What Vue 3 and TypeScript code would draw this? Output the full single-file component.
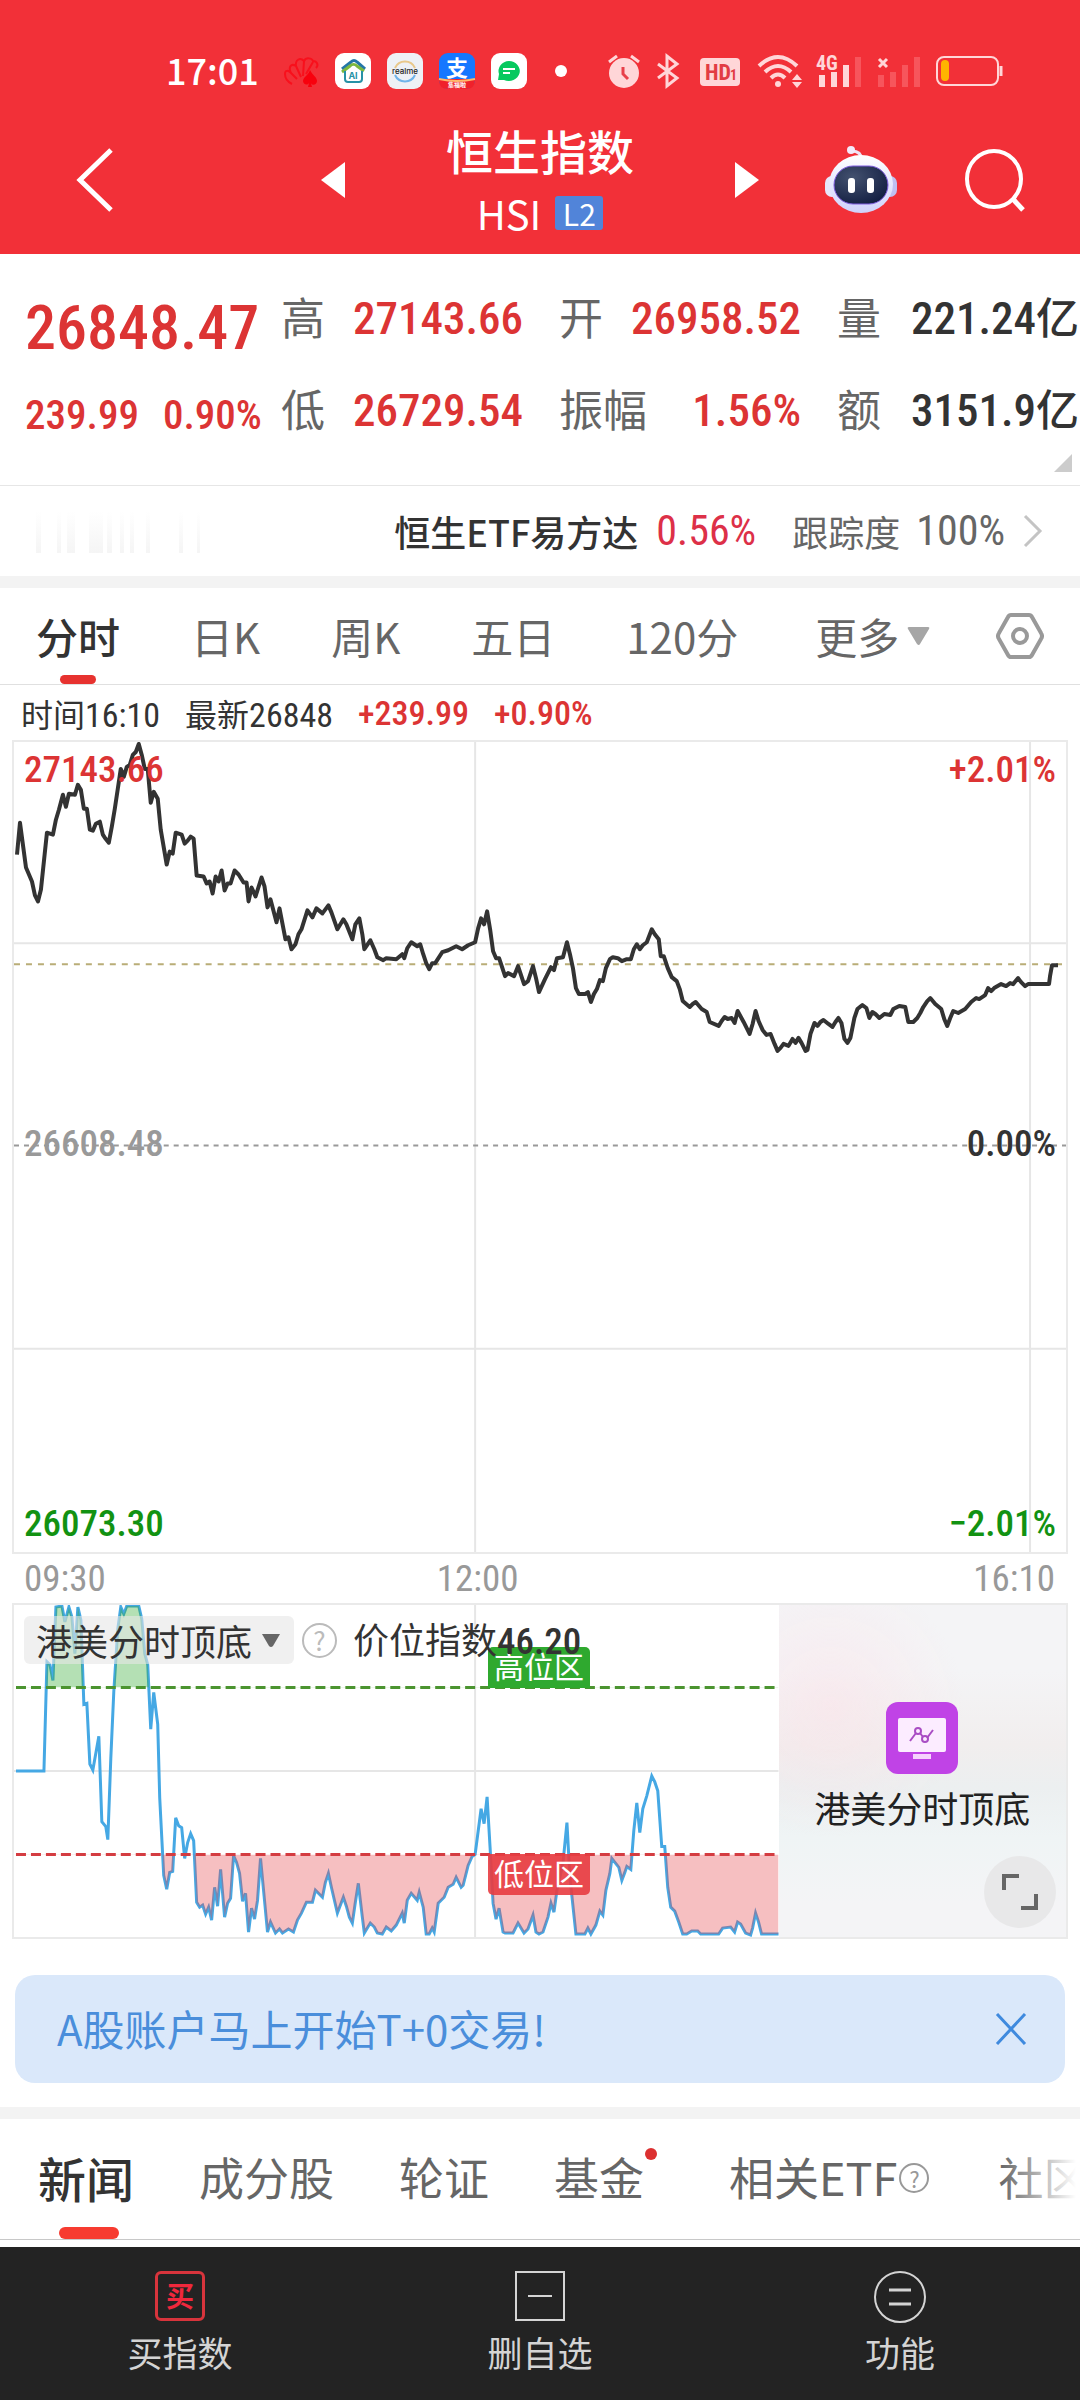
<script setup lang="ts">
import { ref } from 'vue'

interface Quote { label: string; value: string; unit?: string; up: boolean }
interface Section { name: string; dot?: boolean; help?: boolean }

const quotes: Quote[] = [
  { label: '高', value: '27143.66', up: true },
  { label: '开', value: '26958.52', up: true },
  { label: '量', value: '221.24', unit: '亿', up: false },
  { label: '低', value: '26729.54', up: true },
  { label: '振幅', value: '1.56%', up: true },
  { label: '额', value: '3151.9', unit: '亿', up: false }
]

const periods: string[] = ['分时', '日K', '周K', '五日', '120分']
const period = ref<string>('分时')

const sections: Section[] = [
  { name: '新闻' },
  { name: '成分股' },
  { name: '轮证' },
  { name: '基金', dot: true },
  { name: '相关ETF', help: true },
  { name: '社区' }
]
const section = ref<string>('新闻')
const bannerOpen = ref<boolean>(true)

// Intraday price, in chart units (1054 x 813)
const price =
  '3,113 6,81 12,126 18,140 21,154 24,160 27,148 33,91 39,93 42,78 45,68 49,53 52,65 55,52 61,53 64,43 67,48 70,67 73,67 76,88 79,89 82,82 86,80 89,93 91,96 95,101 98,85 101,67 104,47 107,27 110,35 113,25 116,23 119,13 122,10 125,2 128,13 131,27 134,27 137,61 140,50 144,57 147,88 153,123 156,110 159,112 162,91 168,93 171,102 174,99 177,95 180,97 183,134 190,135 193,142 196,140 199,152 202,135 205,140 208,129 211,149 214,142 217,142 221,129 225,133 230,141 233,141 235,160 238,146 242,155 248,136 251,145 254,166 257,158 263,181 266,167 272,198 275,196 278,208 282,203 285,193 288,188 294,169 299,176 303,167 309,172 315,164 318,171 324,188 330,178 333,183 339,198 342,183 346,177 349,193 351,208 357,199 361,208 364,216 370,219 373,217 383,218 389,213 391,217 394,207 398,201 404,205 407,203 410,213 413,222 416,228 419,222 422,222 429,211 435,209 443,205 449,208 455,204 462,201 465,187 468,177 471,183 474,170 477,188 480,210 483,217 486,217 492,235 495,232 501,235 505,225 511,243 515,240 520,225 523,237 526,251 532,238 538,226 541,229 544,217 550,216 554,201 557,213 560,227 563,247 566,253 572,253 575,251 578,261 581,253 584,248 587,239 590,240 593,227 597,218 600,216 605,217 609,220 614,218 618,218 621,208 624,203 627,208 630,204 634,201 639,188 642,193 646,198 648,215 651,215 655,227 659,236 664,240 667,248 670,260 677,266 680,263 683,261 689,268 694,271 697,281 706,285 709,280 712,276 715,278 719,277 722,282 725,270 731,281 737,293 740,283 743,270 746,280 750,289 754,294 758,293 762,303 765,310 768,307 771,303 776,305 780,298 783,302 786,297 789,302 793,310 795,309 798,293 802,282 805,285 808,281 811,279 816,283 820,286 823,281 826,277 829,282 832,298 835,302 838,297 842,277 845,268 850,264 854,267 857,277 860,271 863,273 867,277 872,273 878,274 881,268 887,265 893,266 896,281 901,281 905,277 908,272 911,266 915,260 918,257 923,263 929,268 932,278 935,285 938,277 941,270 946,272 953,268 959,261 964,257 967,258 973,254 976,247 979,250 982,247 989,243 994,245 998,242 1001,243 1006,237 1009,241 1013,245 1016,243 1037,243 1038,235 1040,224 1046,224'

// Position index, in chart units (766 x 334)
const position =
  '2,167 30,167 33,57 36,60 39,76 42,2 48,1 51,17 55,2 58,12 61,49 64,2 67,15 70,100 73,99 76,160 79,166 85,132 88,218 92,223 94,236 97,154 100,87 104,24 107,2 110,9 113,1 125,1 128,14 131,49 134,60 137,125 140,88 144,120 146,194 150,272 153,286 156,269 159,268 162,214 165,222 168,224 171,255 174,239 177,230 180,237 183,299 186,304 189,302 192,311 195,304 198,317 201,284 204,303 207,266 211,314 214,300 217,295 220,252 223,259 226,270 229,298 232,290 235,329 238,305 241,316 244,297 247,255 254,329 257,319 262,330 266,326 269,330 275,326 280,329 284,317 288,310 293,299 299,299 302,287 309,294 312,279 315,270 318,284 324,310 330,294 333,303 336,314 339,320 342,299 345,280 349,314 351,330 357,320 361,324 364,330 369,331 373,324 378,328 383,322 389,310 391,320 394,297 398,290 404,297 406,289 410,304 413,331 416,331 419,325 421,329 425,300 431,294 435,284 440,281 443,274 448,284 450,282 455,262 459,253 462,251 468,205 471,220 474,193 477,244 480,300 483,316 486,305 490,329 492,330 500,330 505,320 511,330 515,326 520,312 523,329 526,331 530,329 535,314 538,300 541,309 544,287 550,260 554,219 557,274 563,331 572,331 575,325 578,331 583,322 587,308 590,312 593,287 597,270 599,255 606,264 609,277 612,269 614,263 618,266 621,227 624,199 627,229 630,205 634,192 639,172 642,178 645,187 649,243 652,243 655,284 658,304 662,308 666,319 670,331 674,331 679,328 685,328 688,331 706,331 710,325 718,324 722,329 725,319 728,321 733,330 738,332 740,325 743,310 746,319 749,331 766,331'

const highArea = `2,83 ${position} 766,83`
const lowArea = `2,251 ${position} 766,251`
</script>

<template>
  <div class="app">
    <header class="top">
      <div class="status">
        <span class="clock">17:01</span>
        <div class="notices">
          <svg width="36" height="36" viewBox="0 0 36 36" aria-hidden="true">
            <path d="M9 31C5 29 2 25 2 21c0-4 3-4 6-1-3-6 0-10 5-7-1-6 4-9 8-5 2-4 8-3 9 0 4 0 6 4 3 7M8 20l6 6M13 13l5 11M21 8l-1 15M30 9l-7 12" fill="none" stroke="#f8101c" stroke-width="2" />
            <path d="M27 17c3 6 7 7 7 11 0 4-5 5-6 2l1 4h-4l1-4c-2 3-6 1-6-2 0-4 5-5 7-11z" fill="#f8000d" />
          </svg>
          <svg width="36" height="36" viewBox="0 0 36 36" aria-hidden="true">
            <rect width="36" height="36" rx="9" fill="#fff" />
            <path d="M7 16l9-7c2-2 4-2 6 0l8 7" fill="none" stroke="#2476a8" stroke-width="3" />
            <path d="M7 19l8-6c2-2 5-2 7 0l7 5" fill="none" stroke="#7cb83f" stroke-width="3" />
            <path d="M10 18v8q0 3 3 3h11q3 0 3-3v-8" fill="none" stroke="#2792a6" stroke-width="2" />
            <text x="18" y="26" text-anchor="middle" font-family="Inter" font-size="9" font-weight="700" fill="#2792a6">AI</text>
          </svg>
          <svg width="36" height="36" viewBox="0 0 36 36" aria-hidden="true">
            <rect width="36" height="36" rx="9" fill="#eef1f6" />
            <path d="M8 15a11 11 0 0 1 20 0" fill="none" stroke="#e9c88a" stroke-width="2" />
            <path d="M8 22a11 11 0 0 0 20 0" fill="none" stroke="#6fb4ea" stroke-width="2" />
            <text x="18" y="21" text-anchor="middle" font-family="Inter" font-size="8" font-weight="500" fill="#222">realme</text>
          </svg>
          <svg width="36" height="36" viewBox="0 0 36 36" aria-hidden="true">
            <rect width="36" height="36" rx="9" fill="#1677ff" />
            <path d="M0 26h36v1q0 9-9 9H9q-9 0-9-9z" fill="#f0212b" />
            <path d="M0 26q18 4 36 0" fill="none" stroke="#ffb86b" stroke-width="2" />
            <text x="18" y="23" text-anchor="middle" font-family="Noto Sans CJK SC" font-size="22" font-weight="700" fill="#fff">支</text>
            <text x="18" y="34" text-anchor="middle" font-family="Noto Sans CJK SC" font-size="6" font-weight="700" fill="#fff">集福啦</text>
          </svg>
          <svg width="36" height="36" viewBox="0 0 36 36" aria-hidden="true">
            <rect width="36" height="36" rx="9" fill="#fff" />
            <path d="M18 8a11 10 0 1 1-5 19H7l1-6A11 10 0 0 1 18 8z" fill="#07c95f" />
            <path d="M12 16h12M12 20h7" stroke="#fff" stroke-width="2" />
          </svg>
        </div>
        <span class="more-dot"></span>
        <div class="signals">
          <svg width="32" height="36" viewBox="0 0 32 36" aria-hidden="true">
            <circle cx="16" cy="20" r="15" fill="#ffd6d8" />
            <path d="M1 9l8-6M31 9l-8-6" stroke="#ffd6d8" stroke-width="3" />
            <path d="M15 14v7l5 5" fill="none" stroke="#e8404a" stroke-width="3" />
          </svg>
          <svg width="28" height="36" viewBox="0 0 28 36" aria-hidden="true">
            <path d="M4 11l19 14-10 8V3l10 8L4 25" fill="none" stroke="#ffd6d8" stroke-width="3" />
          </svg>
          <svg width="46" height="36" viewBox="0 0 46 36" aria-hidden="true">
            <rect x="4" y="5" width="40" height="28" rx="4" fill="#ffd6d8" />
            <text x="9" y="27" font-family="Roboto Condensed" font-size="22" font-weight="700" fill="#e23b44">HD</text>
            <text x="34" y="27" font-family="Roboto Condensed" font-size="14" font-weight="700" fill="#e23b44">1</text>
          </svg>
          <svg width="46" height="36" viewBox="0 0 46 36" aria-hidden="true">
            <path d="M3 13q19-18 38 0M9 19q13-12 26 0M15 25q7-7 14 0" fill="none" stroke="#ffd6d8" stroke-width="4" />
            <circle cx="22" cy="31" r="3" fill="#ffd6d8" />
            <path d="M36 27l5-6 5 6zM36 29l5 6 5-6z" fill="#ffd6d8" />
          </svg>
          <svg width="48" height="36" viewBox="0 0 48 36" aria-hidden="true">
            <path d="M3 22h6v12H3zM15 19h6v15h-6zM27 12h6v22h-6z" fill="#ffd6d8" />
            <path d="M39 4h6v30h-6z" fill="#f7555c" />
            <text x="0" y="17" font-family="Roboto Condensed" font-size="20" font-weight="700" fill="#ffd6d8">4G</text>
          </svg>
          <svg width="44" height="36" viewBox="0 0 44 36" aria-hidden="true">
            <path d="M0 22h6v12H0zM12 19h6v15h-6zM24 12h6v22h-6zM36 4h6v30h-6z" fill="#f7555c" />
            <path d="M1 6l8 8M9 6l-8 8" stroke="#ffd6d8" stroke-width="3" />
          </svg>
          <svg width="68" height="36" viewBox="0 0 68 36" aria-hidden="true">
            <rect x="1" y="4" width="61" height="28" rx="7" fill="none" stroke="#ffd6d8" stroke-width="2" />
            <rect x="5" y="7" width="8" height="21" rx="4" fill="#ffb400" />
            <path d="M65 13v10" stroke="#ffd6d8" stroke-width="3" />
          </svg>
        </div>
      </div>

      <nav class="title-bar">
        <button class="back" aria-label="返回">
          <svg width="40" height="68" viewBox="0 0 40 68"><path d="M36 4L5 34l31 30" fill="none" stroke="#fff" stroke-width="5" /></svg>
        </button>
        <div class="title-group">
          <button aria-label="上一个"><svg width="24" height="36" viewBox="0 0 24 36"><path d="M24 0v36L0 18z" fill="#fff" /></svg></button>
          <div class="title">
            <h1>恒生指数</h1>
            <p><span>HSI</span><span class="badge">L2</span></p>
          </div>
          <button aria-label="下一个"><svg width="24" height="36" viewBox="0 0 24 36"><path d="M0 0v36l24-18z" fill="#fff" /></svg></button>
        </div>
        <div class="tools">
          <button aria-label="智能助手">
            <svg width="72" height="68" viewBox="0 0 72 68">
              <defs>
                <linearGradient id="shell" x1="0" y1="0" x2="0" y2="1">
                  <stop offset="0" stop-color="#fff" />
                  <stop offset="1" stop-color="#cfd2fb" />
                </linearGradient>
                <radialGradient id="visor" cx="35%" cy="30%" r="80%">
                  <stop offset="0" stop-color="#43516f" />
                  <stop offset="1" stop-color="#111d40" />
                </radialGradient>
              </defs>
              <path d="M25 5q11-1 12 9" fill="none" stroke="#efe3f5" stroke-width="3" />
              <circle cx="26" cy="4" r="4" fill="#f3eafa" />
              <rect x="0" y="30" width="14" height="21" rx="7" fill="#e6e6fb" />
              <rect x="58" y="30" width="14" height="21" rx="7" fill="#bfc0f2" />
              <ellipse cx="36" cy="38" rx="32" ry="29" fill="url(#shell)" />
              <rect x="9" y="20" width="54" height="38" rx="19" fill="url(#visor)" stroke="#7f5ce0" stroke-width="1" />
              <rect x="23" y="32" width="7" height="15" rx="3" fill="#fff" />
              <rect x="42" y="32" width="7" height="15" rx="3" fill="#fff" />
            </svg>
          </button>
          <button aria-label="搜索">
            <svg width="60" height="64" viewBox="0 0 60 64"><ellipse cx="29" cy="31" rx="27" ry="28" fill="none" stroke="#fff" stroke-width="4" /><path d="M47 50l11 12" stroke="#fff" stroke-width="5" /></svg>
          </button>
        </div>
      </nav>
    </header>

    <main>
      <section class="summary">
        <div class="last">
          <strong>26848.47</strong>
          <p><span>239.99</span><span>0.90%</span></p>
        </div>
        <dl class="quotes">
          <div v-for="q in quotes" :key="q.label">
            <dt>{{ q.label }}</dt>
            <dd :class="{ up: q.up }">{{ q.value }}<span v-if="q.unit">{{ q.unit }}</span></dd>
          </div>
        </dl>
        <span class="corner"></span>
      </section>

      <a class="etf" href="#etf">
        <svg class="ghost" width="180" height="48" viewBox="0 0 180 48" aria-hidden="true">
          <defs>
            <linearGradient id="fade" x1="0" y1="0" x2="0" y2="1">
              <stop offset="0" stop-color="#fff" />
              <stop offset="1" stop-color="#f5f5f5" />
            </linearGradient>
          </defs>
          <path d="M11 4h5v42h-5zM32 4h4v42h-4zM42 4h8v42h-8zM64 4h14v42H64zM82 4h5v42h-5zM95 4h4v42h-4zM105 4h4v42h-4zM121 4h4v42h-4zM154 4h4v42h-4zM172 4h3v42h-3z" fill="url(#fade)" />
        </svg>
        <span class="etf-name">恒生ETF易方达</span>
        <span class="num etf-change">0.56%</span>
        <span class="track">跟踪度</span>
        <span class="num track-value">100%</span>
        <svg width="20" height="34" viewBox="0 0 20 34" aria-hidden="true"><path d="M2 2l15 15L2 32" fill="none" stroke="#c4c4c4" stroke-width="3" /></svg>
      </a>

      <nav class="periods">
        <button v-for="p in periods" :key="p" :class="{ active: p === period }" @click="period = p">{{ p }}</button>
        <button class="more">更多<svg width="23" height="19" viewBox="0 0 23 19" aria-hidden="true"><path d="M2 0h19q2 0 1 2L13 17q-1 2-3 0L1 2q-1-2 1-2z" fill="#a6a6a6" /></svg></button>
        <button class="gear" aria-label="设置">
          <svg width="48" height="48" viewBox="0 0 48 48"><path d="M15 3h18q2 0 3 2l9 16q2 3 0 6l-9 16q-1 2-3 2H15q-2 0-3-2L3 27q-2-3 0-6l9-16q1-2 3-2z" fill="none" stroke="#999" stroke-width="4" /><circle cx="24" cy="24" r="7" fill="none" stroke="#999" stroke-width="4" /></svg>
        </button>
      </nav>

      <p class="readout">
        <span>时间<b>16:10</b></span>
        <span>最新<b>26848</b></span>
        <b class="up">+239.99</b>
        <b class="up">+0.90%</b>
      </p>

      <section class="chart">
        <svg viewBox="0 0 1054 813" preserveAspectRatio="none" aria-label="分时走势">
          <path d="M0 202H1054M0 609H1054M462 0V813M1018 0V813" class="grid" />
          <path d="M0 223H1054" stroke="#b9ad77" stroke-width="2" stroke-dasharray="6 6" />
          <path d="M0 405H1054" stroke="#999" stroke-width="2" stroke-dasharray="5 5" />
          <polyline :points="price" fill="none" stroke="#333" stroke-width="4" stroke-linejoin="round" vector-effect="non-scaling-stroke" />
        </svg>
        <div class="scale">
          <p class="up"><span>27143.66</span><span>+2.01%</span></p>
          <p class="zero"><span>26608.48</span><span>0.00%</span></p>
          <p class="down"><span>26073.30</span><span>−2.01%</span></p>
        </div>
      </section>
      <p class="times"><span>09:30</span><span>12:00</span><span>16:10</span></p>

      <section class="indicator">
        <div class="plot">
          <svg viewBox="0 0 766 334" preserveAspectRatio="none" aria-label="价位指数">
            <defs>
              <clipPath id="high"><rect x="0" y="0" width="766" height="83" /></clipPath>
              <clipPath id="low"><rect x="0" y="251" width="766" height="83" /></clipPath>
            </defs>
            <path d="M0 167H766M462 0V334" class="grid" />
            <polyline :points="position" fill="none" stroke="#45a8e4" stroke-width="3" vector-effect="non-scaling-stroke" />
            <polygon :points="highArea" clip-path="url(#high)" fill="#2ea82e" fill-opacity=".36" />
            <polygon :points="lowArea" clip-path="url(#low)" fill="#e54348" fill-opacity=".34" />
            <path d="M2 83H766" stroke="#4b9430" stroke-width="3" stroke-dasharray="10 5" />
            <path d="M2 251H766" stroke="#d43c41" stroke-width="3" stroke-dasharray="10 5" />
          </svg>
          <span class="zone high">高位区</span>
          <span class="zone low">低位区</span>
          <div class="legend">
            <button class="picker">港美分时顶底<svg width="18" height="13" viewBox="0 0 18 13" aria-hidden="true"><path d="M0 0h18L11 12q-2 2-4 0z" fill="#666" /></svg></button>
            <button class="help" aria-label="说明">?</button>
            <span>价位指数<b>46.20</b></span>
          </div>
        </div>
        <aside class="promo">
          <svg width="72" height="72" viewBox="0 0 72 72" aria-hidden="true">
            <rect width="72" height="72" rx="12" fill="#c043e6" />
            <rect x="12" y="16" width="48" height="34" rx="2" fill="#fcecff" />
            <rect x="27" y="52" width="18" height="5" fill="#f6d3fd" />
            <path d="M24 39l6-8M34 31l3 4M41 36l6-8" stroke="#a94dc4" stroke-width="2" />
            <circle cx="32" cy="29" r="3" fill="none" stroke="#a94dc4" stroke-width="2" />
            <circle cx="39" cy="37" r="3" fill="none" stroke="#a94dc4" stroke-width="2" />
          </svg>
          <p>港美分时顶底</p>
          <button class="expand" aria-label="全屏">
            <svg width="40" height="40" viewBox="0 0 40 40"><path d="M4 18V4h15M36 22v14H21" fill="none" stroke="#666" stroke-width="4" /></svg>
          </button>
        </aside>
      </section>

      <div v-if="bannerOpen" class="banner">
        <a href="#t0">A股账户马上开始T+0交易!</a>
        <button aria-label="关闭" @click="bannerOpen = false">
          <svg width="32" height="32" viewBox="0 0 32 32"><path d="M2 1l28 30M30 1L2 31" stroke="#3f8ade" stroke-width="3" /></svg>
        </button>
      </div>

      <nav class="sections">
        <button v-for="s in sections" :key="s.name" :class="{ active: s.name === section, dotted: s.dot }" @click="section = s.name">
          {{ s.name }}<span v-if="s.help" class="q">?</span>
        </button>
      </nav>
    </main>

    <footer class="actions">
      <button>
        <span class="buy">买</span>
        买指数
      </button>
      <button>
        <svg width="50" height="50" viewBox="0 0 50 50" aria-hidden="true"><path d="M1 1h48v48H1zM13 25h24" fill="none" stroke="#d4d4d4" stroke-width="2" /></svg>
        删自选
      </button>
      <button>
        <svg width="52" height="52" viewBox="0 0 52 52" aria-hidden="true"><circle cx="26" cy="26" r="25" fill="none" stroke="#d4d4d4" stroke-width="2" /><path d="M15 19h22M15 33h22" stroke="#d4d4d4" stroke-width="3" /></svg>
        功能
      </button>
    </footer>
  </div>
</template>

<style>
body {
  margin: 0;
  background: #fff;
}
</style>

<style scoped>
* {
  box-sizing: border-box;
}

.app {
  min-height: 100vh;
  display: flex;
  flex-direction: column;
  overflow: hidden;
  background: #fff;
  color: #333;
  font-family: 'Noto Sans CJK SC', sans-serif;
}

main {
  flex: 1;
}

button {
  margin: 0;
  padding: 0;
  border: 0;
  background: none;
  color: inherit;
  font: inherit;
  white-space: nowrap;
}

a {
  color: inherit;
  text-decoration: none;
}

h1, p, dl, dd {
  margin: 0;
}

svg {
  display: block;
  flex-shrink: 0;
}

b, strong, .num, .scale, .times {
  font-family: 'Roboto Condensed', 'Noto Sans CJK SC', sans-serif;
  font-weight: 500;
}

.up {
  color: #dc3434;
}

.down {
  color: #129212;
}

/* Header */
.top {
  height: 254px;
  background: #f23038;
  color: #fff;
}

.status {
  display: flex;
  align-items: center;
  height: 106px;
  padding: 36px 76px 0 166px;
}

.status svg {
  overflow: visible;
}

.clock {
  width: 118px;
  padding-bottom: 4px;
  font-size: 36px;
  font-weight: 500;
}

.notices {
  display: flex;
  gap: 16px;
}

.more-dot {
  width: 12px;
  height: 12px;
  margin: 0 41px 0 28px;
  border-radius: 50%;
  background: #fff;
}

.signals {
  display: flex;
  gap: 14px;
}

.title-bar {
  display: grid;
  grid-template-columns: 1fr 438px 1fr;
  align-items: center;
  height: 148px;
}

.back {
  justify-self: start;
  margin-left: 75px;
}

.title-group,
.tools {
  display: flex;
  align-items: center;
  justify-content: space-between;
}

.title {
  text-align: center;
}

.title h1 {
  font-size: 47px;
  font-weight: 500;
  line-height: 66px;
}

.title p {
  display: flex;
  align-items: center;
  justify-content: center;
  gap: 14px;
  font-size: 40px;
  line-height: 60px;
}

.badge {
  width: 48px;
  border-radius: 3px;
  background: #5184d9;
  font-size: 30px;
  line-height: 34px;
}

.tools {
  justify-content: flex-end;
  gap: 68px;
  padding-right: 55px;
}

/* Price summary */
.summary {
  position: relative;
  display: flex;
  height: 232px;
  padding: 19px 1px 0 25px;
  border-bottom: 1px solid #e6e6e6;
}

.last {
  flex: 0 0 256px;
  padding-top: 8px;
  color: #dc3434;
}

.last strong {
  display: block;
  font-size: 62px;
  line-height: 94px;
}

.last p {
  display: flex;
  gap: 24px;
  font: 500 41px/80px 'Roboto Condensed', sans-serif;
}

.quotes {
  flex: 1;
  display: grid;
  grid-template-columns: repeat(3, 1fr);
  grid-auto-rows: 92px;
  column-gap: 36px;
}

.quotes div {
  display: flex;
  justify-content: space-between;
  line-height: 92px;
  white-space: nowrap;
}

.quotes dt {
  color: #666;
  font-size: 44px;
  line-height: 86px;
}

.quotes dd {
  font: 500 45px/92px 'Roboto Condensed', 'Noto Sans CJK SC', sans-serif;
}

.quotes dd span {
  font-size: 43px;
}

.corner {
  position: absolute;
  right: 8px;
  bottom: 13px;
  border-bottom: 18px solid #ccc;
  border-left: 18px solid transparent;
}

/* Linked fund */
.etf {
  display: flex;
  align-items: center;
  height: 102px;
  padding: 0 37px 0 25px;
  border-bottom: 12px solid #f3f3f3;
  font-size: 36px;
}

.etf-name {
  margin-left: auto;
  font-weight: 500;
}

.num {
  padding-bottom: 2px;
  font-size: 42px;
}

.etf-change {
  margin: 0 36px 0 18px;
  color: #dd3048;
  font-weight: 400;
}

.track,
.track-value {
  color: #666;
  font-weight: 400;
}

.track-value {
  margin: 0 18px 0 16px;
}

/* Period tabs */
.periods {
  display: flex;
  align-items: center;
  gap: 71px;
  height: 97px;
  padding: 0 36px;
  border-bottom: 1px solid #e0e0e0;
  color: #666;
  font-size: 42px;
  line-height: 96px;
}

.periods .active {
  position: relative;
  color: #333;
  font-weight: 500;
}

.periods .active::after {
  content: '';
  position: absolute;
  bottom: 0;
  left: 24px;
  width: 36px;
  height: 9px;
  border-radius: 5px;
  background: #e7322f;
}

.more {
  display: flex;
  align-items: center;
  gap: 8px;
  margin: 0 -20px 0 6px;
}

.gear {
  margin-left: auto;
}

.readout {
  display: flex;
  align-items: center;
  gap: 25px;
  height: 55px;
  padding: 0 21px;
  font-size: 32px;
}

.readout b {
  font-size: 34px;
}

.readout span b {
  font-weight: 400;
}

/* Intraday chart */
.chart {
  position: relative;
  height: 814px;
  margin: 0 12px;
  border: 2px solid #eaeaea;
}

.chart svg,
.plot > svg {
  width: 100%;
  height: 100%;
}

.grid {
  fill: none;
  stroke: #e6e6e6;
  stroke-width: 2;
}

.scale {
  position: absolute;
  inset: 6px 10px;
  display: flex;
  flex-direction: column;
  justify-content: space-between;
  font-size: 37px;
  line-height: 44px;
}

.scale p {
  display: flex;
  justify-content: space-between;
}

.scale .zero {
  padding-bottom: 7px;
}

.zero span:first-child {
  color: #999;
}

.times {
  display: grid;
  grid-template-columns: 37% 14% 1fr;
  height: 49px;
  padding: 0 25px 0 24px;
  color: #999;
  font-size: 37px;
  font-weight: 400;
  line-height: 50px;
  text-align: center;
}

.times span:first-child {
  text-align: left;
}

.times span:last-child {
  text-align: right;
}

/* Position indicator */
.indicator {
  display: grid;
  grid-template-columns: 766fr 288fr;
  height: 336px;
  margin: 0 12px;
  border: 2px solid #eaeaea;
}

.plot {
  position: relative;
  height: 332px;
}

.zone {
  position: absolute;
  left: 62%;
  width: 102px;
  padding-bottom: 4px;
  color: #fff;
  font-size: 30px;
  line-height: 37px;
  text-align: center;
}

.zone.high {
  bottom: 75%;
  border-radius: 5px 5px 0 0;
  background: #2fa92f;
}

.zone.low {
  top: 75%;
  border-radius: 0 0 5px 5px;
  background: rgba(232, 60, 65, 0.9);
}

.legend {
  position: absolute;
  top: 9px;
  left: 10px;
  display: flex;
  align-items: center;
  font-size: 36px;
  line-height: 48px;
  white-space: nowrap;
}

.legend b {
  font-size: 37px;
}

.picker {
  display: flex;
  align-items: center;
  gap: 10px;
  width: 270px;
  padding-left: 12px;
  border-radius: 6px;
  background: rgba(230, 230, 230, 0.6);
}

.help {
  width: 35px;
  height: 35px;
  margin: 0 16px 0 8px;
  border: 2px solid #bbb;
  border-radius: 50%;
  color: #bbb;
  font-size: 26px;
  line-height: 30px;
}

.promo {
  position: relative;
  display: flex;
  flex-direction: column;
  align-items: center;
  padding-top: 97px;
  background:
    radial-gradient(circle at 18% 30%, rgba(255, 220, 228, 0.4), transparent 40%),
    linear-gradient(#f4f4f6 20%, #f1eeee 42%, #eceff0 55%, #eff4f5 70%, #f4f4f6 90%);
  color: #222;
  font-size: 36px;
}

.promo p {
  margin-top: 8px;
  line-height: 50px;
}

.expand {
  position: absolute;
  right: 10px;
  bottom: 9px;
  display: grid;
  place-items: center;
  width: 72px;
  height: 72px;
  border-radius: 50%;
  background: #e8e8e9;
}

/* Notice */
.banner {
  display: flex;
  align-items: center;
  justify-content: space-between;
  height: 108px;
  margin: 36px 15px 24px;
  padding: 0 38px 0 42px;
  border-radius: 20px;
  background: #dae8fa;
  color: #4a8edb;
  font-size: 42px;
}

.banner a {
  padding-bottom: 4px;
}

/* Section tabs */
.sections {
  position: relative;
  display: flex;
  gap: 65px;
  height: 133px;
  padding-left: 38px;
  border-top: 12px solid #f3f3f3;
  border-bottom: 1px solid #c8c8c8;
  color: #666;
  font-size: 45px;
  line-height: 116px;
}

.sections::after {
  content: '';
  position: absolute;
  inset: 0 0 0 auto;
  width: 80px;
  background: linear-gradient(90deg, rgba(255, 255, 255, 0), #fff 95%);
}

.sections button {
  position: relative;
  display: flex;
  flex-shrink: 0;
}

.sections .active {
  color: #333;
  font-size: 48px;
  font-weight: 500;
}

.sections .active::after {
  content: '';
  position: absolute;
  bottom: 0;
  left: 21px;
  width: 60px;
  height: 12px;
  border-radius: 6px;
  background: #f73b30;
}

.sections .dotted {
  padding-right: 20px;
}

.dotted::after {
  content: '';
  position: absolute;
  top: 29px;
  right: 7px;
  width: 12px;
  height: 12px;
  border-radius: 50%;
  background: #dc3030;
}

.q {
  align-self: center;
  width: 30px;
  height: 30px;
  margin: 0 4px 2px 2px;
  border: 2px solid #999;
  border-radius: 50%;
  color: #999;
  font-size: 22px;
  line-height: 26px;
  text-align: center;
}

/* Bottom bar */
.actions {
  display: grid;
  grid-template-columns: repeat(3, 1fr);
  height: 153px;
  padding-top: 24px;
  background: #232323;
  color: #d4d4d4;
  font-size: 35px;
  line-height: 50px;
}

.actions button {
  display: flex;
  flex-direction: column;
  align-items: center;
  justify-content: space-between;
  height: 106px;
}

.buy {
  width: 50px;
  height: 50px;
  border: 3px solid #d8343c;
  border-radius: 6px;
  color: #f0283c;
  font-size: 28px;
  font-weight: 700;
  line-height: 42px;
  text-align: center;
}
</style>
